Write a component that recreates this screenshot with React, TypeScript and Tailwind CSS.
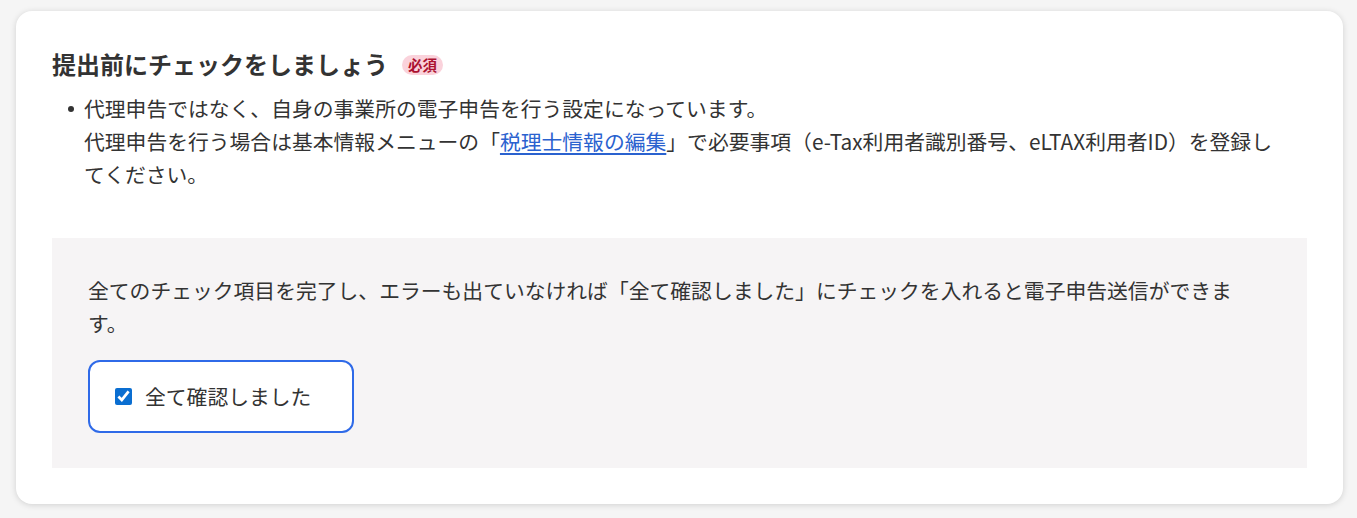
export default function App() {
  return (
    <div className="min-h-[518px] bg-[#f5f5f5] pt-[11px] pl-[16px] pr-[14px] pb-[15px] font-['Noto_Sans_CJK_JP',sans-serif] text-[#333333]">
      <div className="rounded-[16px] bg-white px-[36px] pt-[35px] pb-[36px] shadow-[0_1px_6px_rgba(0,0,0,0.15)]">
        <div className="flex items-center gap-[14px]">
          <h2 className="text-[24px] font-bold leading-[36px]">提出前にチェックをしましょう</h2>
          <span className="mt-[1px] rounded-full bg-[#fad2db] px-[6px] text-[14.5px] font-bold leading-[20px] text-[#ab1130]">必須</span>
        </div>
        <ul className="mt-[10px] text-[20.8px] leading-[33px]">
          <li className="flex pr-[22px]">
            <span className="flex w-[32px] shrink-0 items-start pt-[14px] pl-[16px]">
              <span className="h-[6px] w-[6px] rounded-full bg-[#333333]" />
            </span>
            <span>
              代理申告ではなく、自身の事業所の電子申告を行う設定になっています。
              <br />
              代理申告を行う場合は基本情報メニューの「
              <a href="#" className="text-[#2a62cf] underline underline-offset-[3px]">税理士情報の編集</a>
              」で必要事項（e-Tax利用者識別番号、eLTAX利用者ID）を登録してください。
            </span>
          </li>
        </ul>
        <div className="mt-[47px] bg-[#f6f4f5] px-[36px] pt-[36px] pb-[35px]">
          <p className="text-[20.8px] leading-[33px]">
            全てのチェック項目を完了し、エラーも出ていなければ「全て確認しました」にチェックを入れると電子申告送信ができます。
          </p>
          <label className="mt-[20px] flex h-[73px] w-[266px] items-center gap-[13px] rounded-[12px] border-2 border-[#2f6ae8] bg-white pl-[25px]">
            <input type="checkbox" defaultChecked className="h-[17px] w-[17px] accent-[#0a6ed1]" />
            <span className="text-[20.8px] leading-[33px]">全て確認しました</span>
          </label>
        </div>
      </div>
    </div>
  );
}
